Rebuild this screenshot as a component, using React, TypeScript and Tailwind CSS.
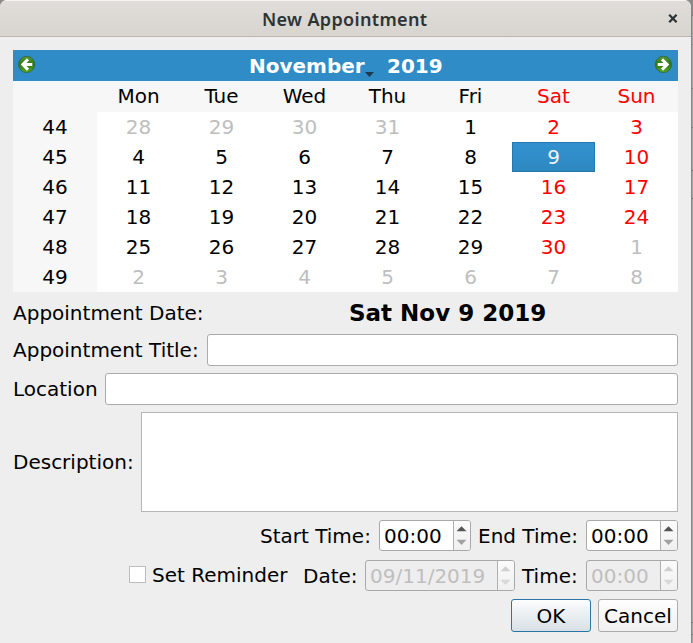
import React from "react";

const WEEKS: [number, number[]][] = [
  [44, [28, 29, 30, 31, 1, 2, 3]],
  [45, [4, 5, 6, 7, 8, 9, 10]],
  [46, [11, 12, 13, 14, 15, 16, 17]],
  [47, [18, 19, 20, 21, 22, 23, 24]],
  [48, [25, 26, 27, 28, 29, 30, 1]],
  [49, [2, 3, 4, 5, 6, 7, 8]],
];
const DAYS = ["Mon", "Tue", "Wed", "Thu", "Fri", "Sat", "Sun"];

function dayStyle(row: number, col: number, day: number) {
  if ((row === 0 && day > 20) || (row >= 4 && day < 20)) return "leading-[30px] text-[#bebebe]";
  if (row === 1 && col === 5) return "border border-[#2678ac] bg-linear-to-b from-[#3292cf] to-[#2e88c1] leading-[28px] text-[#eef4f8]";
  return col > 4 ? "leading-[30px] text-[#ff0000]" : "leading-[30px] text-black";
}

function Arrow({ right = false }: { right?: boolean }) {
  return (
    <svg width="18" height="18" viewBox="0 0 18 18" className={right ? "-scale-x-100" : ""}>
      <defs>
        <linearGradient id="green" x1="0" y1="0" x2="0" y2="1">
          <stop offset="0" stopColor="#5a9a38" />
          <stop offset="0.5" stopColor="#2f7413" />
          <stop offset="1" stopColor="#5cab28" />
        </linearGradient>
      </defs>
      <circle cx="8.6" cy="9.4" r="8.1" fill="url(#green)" stroke="#2f6a3c" strokeWidth="0.9" />
      <path d="M14.3 9.5H5M10 4.4L4.8 9.5L10 14.6" fill="none" stroke="white" strokeWidth="3" />
    </svg>
  );
}

function Spin({ value, width, disabled = false }: { value: string; width: string; disabled?: boolean }) {
  const frame = disabled ? "bg-[#eeeeee] text-[#bebebe]" : "bg-white text-black";
  return (
    <div className={`flex h-[31px] shrink-0 overflow-hidden rounded-[3px] border border-[#a9a9a9] ${width} ${frame}`}>
      <div className="flex-1 pl-1 leading-[30px]">{value}</div>
      <div className="w-[17px] border-l border-[#b0b0b0] bg-linear-to-b from-[#fbfbfb] to-[#f0f0f0]">
        <svg width="16" height="29" viewBox="0 0 16 29">
          <path d="M2.5 10.3L7.5 5.2L12.5 10.3Z" fill={disabled ? "#d0d0d0" : "#555555"} />
          <path d="M2.5 18.8L7.5 23.9L12.5 18.8Z" fill={disabled ? "#d8d8d8" : "#a2a2a2"} />
        </svg>
      </div>
    </div>
  );
}

export default function App() {
  return (
    <div className="flex h-[643px] w-[693px] overflow-hidden bg-[#8e8c89] font-['DejaVu_Sans',sans-serif] text-[20px] leading-[30px] whitespace-nowrap text-black">
      <div className="flex w-[691px] shrink-0 flex-col overflow-hidden rounded-t-[7px] bg-[#eeeeee]">
        <header className="flex h-[37px] shrink-0 items-center border-t border-b border-t-[#f5f4f3] border-b-[#bfb8b1] bg-linear-to-b from-[#e0ddda] to-[#d8d4cf] text-[#2e3436]">
          <h1 className="w-full pl-[262px] font-['Noto_Sans',sans-serif] text-[18px] font-semibold tracking-[0.34px]">New Appointment</h1>
          <svg width="10" height="10" viewBox="0 0 10 10" className="mr-[13px] shrink-0">
            <path d="M1.2 0.8L8.6 8.2M8.6 0.8L1.2 8.2" stroke="#2e3436" strokeWidth="2.3" />
          </svg>
        </header>
        <main className="flex flex-col px-[13px] pt-[13px]">
          <section className="w-[665px]">
            <div className="flex h-[31px] items-center bg-[#308cc6] pr-[6px] pb-[3px] pl-[5px] font-bold text-white">
              <Arrow />
              <div className="flex flex-1 pl-[213px] pt-[3px]">
                <span className="w-[116px]">November</span>
                <svg width="9" height="5" viewBox="0 0 9 5" className="mt-[21px]"><path d="M0 0H9L4.5 5Z" fill="#1c3a50" /></svg>
                <span className="pl-[13px]">2019</span>
              </div>
              <Arrow right />
            </div>
            <div className="grid h-[31px] grid-cols-[84px_repeat(7,83px)] bg-[#f7f7f7] text-center">
              <span />
              {DAYS.map((d, i) => <span key={d} className={i > 4 ? "text-[#ff0000]" : ""}>{d}</span>)}
            </div>
            {WEEKS.map(([week, days], r) => (
              <div key={week} className="grid h-[30px] grid-cols-[84px_repeat(7,83px)] bg-white text-center">
                <span className="bg-[#f7f7f7]">{week}</span>
                {days.map((d, c) => <span key={c} className={dayStyle(r, c, d)}>{d}</span>)}
              </div>
            ))}
          </section>
          <div className="flex h-[42px] w-[665px] items-center">
            <span className="w-[204px]">Appointment Date:</span>
            <strong className="flex-1 pl-[132px] text-[23px]">Sat Nov 9 2019</strong>
          </div>
          <div className="flex h-8 w-[665px] items-center">
            <span className="w-[194px]">Appointment Title:</span>
            <div className="h-8 flex-1 rounded-[3px] border border-[#ababab] bg-white" />
          </div>
          <div className="mt-[7px] flex h-8 w-[665px] items-center">
            <span className="w-[92px]">Location</span>
            <div className="h-8 flex-1 rounded-[3px] border border-[#ababab] bg-white" />
          </div>
          <div className="mt-[7px] flex h-[100px] w-[665px] items-center">
            <span className="w-[128px]">Description:</span>
            <div className="h-full flex-1 border border-[#b5b5b5] bg-white" />
          </div>
          <div className="mt-2 flex h-[31px] w-[665px] items-center justify-end">
            <span className="w-[119px]">Start Time:</span>
            <Spin value="00:00" width="w-[92px]" />
            <span className="w-[115px] pl-[7px]">End Time:</span>
            <Spin value="00:00" width="w-[92px]" />
          </div>
          <div className="mt-[9px] flex h-[31px] w-[665px] items-center justify-end">
            <div className="mb-[2px] h-[17px] w-[17px] border border-[#bdbdbd] bg-white" />
            <span className="mb-[2px] w-[157px] pl-[6px]">Set Reminder</span>
            <span className="w-[62px]">Date:</span>
            <Spin value="09/11/2019" width="w-[150px]" disabled />
            <span className="w-[71px] pl-[7px]">Time:</span>
            <Spin value="00:00" width="w-[92px]" disabled />
          </div>
          <div className="mt-2 flex h-[33px] w-[665px] justify-end gap-[7px]">
            <button className="w-20 rounded-[3px] border border-[#2a74a6] bg-linear-to-b from-[#fcfdfd] to-[#d8e0e6] leading-[32px]">OK</button>
            <button className="w-20 rounded-[3px] border border-[#ababab] bg-linear-to-b from-[#fefefe] to-[#f0f0f0] leading-[32px]">Cancel</button>
          </div>
        </main>
      </div>
      {/* sliver of the window behind, with its row separators */}
      <div className="flex w-[2px] flex-col border-l border-[#858585] bg-[#a6a6a6]">
        <div className="h-[15px] bg-[#8e8c89]" />
        <div className="h-[29px] border-t border-[#777777]" />
        <div className="h-[44px] border-t border-[#8c8c8c]" />
        <div className="h-[39px] border-t border-[#777777]" />
        <div className="h-[43px] border-t border-[#777777]" />
        <div className="h-[28px] border-t border-[#666666]" />
        <div className="h-[424px] border-t border-[#666666]" />
        <div className="h-[12px] border-t border-[#777777]" />
        <div className="flex-1 border-t border-[#777777]" />
      </div>
    </div>
  );
}
